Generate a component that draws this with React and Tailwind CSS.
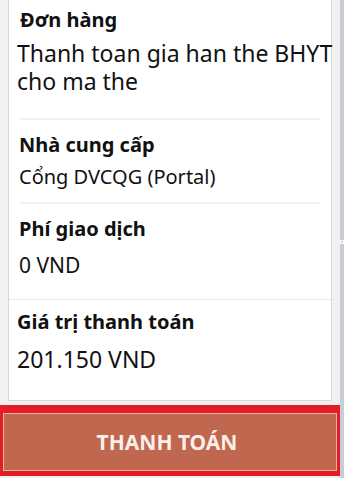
const Divider = ({ inset }) => (
  <div className={inset ? "mx-[11px] h-[2px] bg-[#f0f0f0]" : "h-px bg-[#e6e6e6]"} />
);

export default function App() {
  return (
    <div
      className="flex h-[478px] w-[344px] overflow-hidden bg-[#f1f1f1] text-[#111111]"
      style={{ fontFamily: '"Noto Sans", "Open Sans", sans-serif' }}
    >
      <div className="flex w-[340px] flex-col">
        {/* DETAILS CARD */}
        <div className="mx-[8px] flex h-[401px] flex-col border-x border-b border-[#d8d8d8] bg-white">
          <div className="px-[11px] pt-[8px]">
            <p className="text-[20px] font-bold leading-[24px]">Đơn hàng</p>
            <p className="-ml-[3px] mt-[7px] whitespace-nowrap text-[23px] leading-[28px]">
              Thanh toan gia han the BHYT
              <br />
              cho ma the
            </p>
          </div>
          <div className="mt-[23px]">
            <Divider inset />
          </div>

          <div className="px-[10px] pt-[13px]">
            <p className="text-[20px] font-bold leading-[24px]">Nhà cung cấp</p>
            <p className="mt-[7px] text-[20px] leading-[26px]">Cổng DVCQG (Portal)</p>
          </div>
          <div className="mt-[12px]">
            <Divider inset />
          </div>

          <div className="px-[10px] pt-[13px]">
            <p className="text-[20px] font-bold leading-[24px]">Phí giao dịch</p>
            <p className="mt-[11px] text-[21px] leading-[26px]">0 VND</p>
          </div>
          <div className="mt-[21px]">
            <Divider />
          </div>

          <div className="px-[8px] pt-[10px]">
            <p className="text-[20px] font-bold leading-[24px]">Giá trị thanh toán</p>
            <p className="mt-[11px] text-[23px] leading-[28px]">201.150 VND</p>
          </div>
        </div>

        {/* PAY BUTTON */}
        <div className="mt-[4px] h-[71px] bg-[#e31c25] pb-[5px] pl-[3px] pr-[3px] pt-[8px]">
          <button
            type="button"
            className="flex h-full w-full items-center justify-center border border-[#eab3a4] bg-[#c0674f] pr-[6px] pt-[2px] text-[21px] font-bold text-[#fcefe8]"
          >
            THANH TOÁN
          </button>
        </div>
      </div>

      {/* SCROLLBAR */}
      <div className="flex w-[4px] flex-col bg-[#c7ccd7]">
        <div className="mt-[240px] h-[4px] border border-white" />
      </div>
    </div>
  );
}
